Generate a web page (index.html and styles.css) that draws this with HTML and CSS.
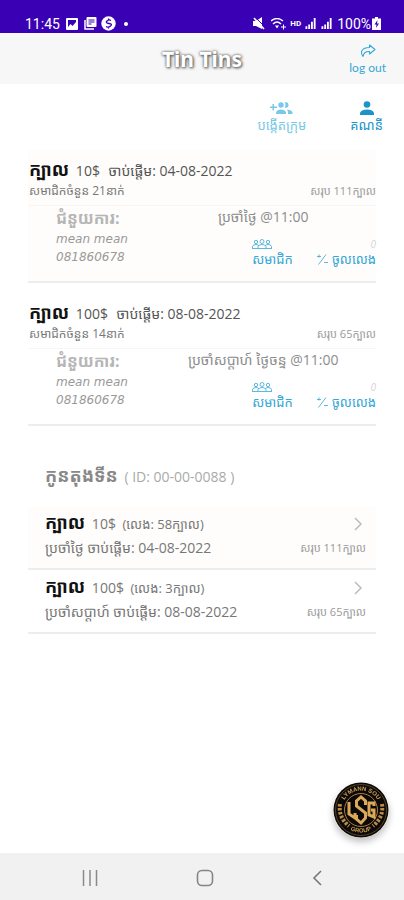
FILE: index.html
```html
<!DOCTYPE html>
<html lang="km">
<head>
<meta charset="UTF-8">
<meta name="viewport" content="width=device-width, initial-scale=1.0">
<title>Tin Tins</title>
<link rel="stylesheet" href="styles.css">
</head>
<body>

<!-- Shared icons -->
<svg class="sprite" aria-hidden="true">
    <symbol id="icon-members" viewBox="0 0 20 10">
        <g fill="none" stroke="currentColor" stroke-width=".8">
            <circle cx="4" cy="3" r="1.7"/>
            <circle cx="10" cy="2.5" r="2"/>
            <circle cx="16" cy="3" r="1.7"/>
            <path d="M.5 9V7.5Q1 5.5 4 5.5q2 0 3 1.5M6 9V7.5q1-2 4-2t4 2V9M13 7q1-1.5 3-1.5 3 0 3.5 2V9M0 9.5h20"/>
        </g>
    </symbol>
    <symbol id="icon-play" viewBox="0 0 11 11">
        <path d="M1.5 10.5L9 .5M0 2.5h4M2 .5v3M7 8.5h4" fill="none" stroke="currentColor" stroke-width=".8"/>
    </symbol>
    <symbol id="icon-chevron" viewBox="0 0 8 14">
        <path d="M1 1l6 6-6 6" fill="none" stroke="currentColor" stroke-width="1.5"/>
    </symbol>
    <symbol id="icon-signal" viewBox="0 0 12 12">
        <path d="M0 9h2v3H0zM3 7h2v5H3zM6 4h2v8H6zM9 0h2v12H9z" fill="currentColor"/>
    </symbol>
</svg>

<div class="status-bar">
    <span class="time">11:45</span>
    <svg width="12" height="12" viewBox="0 0 12 12"><path fill="#fff" fill-rule="evenodd" d="M1 0h10q1 0 1 1v10q0 1-1 1H1q-1 0-1-1V1q0-1 1-1zM2 2v8h8V2z"/><path d="M2 9l2.5-3 2 2L10 4v6H2z" fill="#fff"/></svg>
    <svg class="gap" width="13" height="13" viewBox="0 0 13 13"><path d="M1 3v9h9" fill="none" stroke="#fff" stroke-width="1.5"/><rect x="2.5" width="10" height="10" rx="1" fill="#fff"/><path d="M4.5 3h6M4.5 5h6M4.5 7h3" stroke="#3a00b4"/></svg>
    <svg width="15" height="15" viewBox="0 0 15 15"><circle cx="7.5" cy="7.5" r="7.2" fill="#fff"/><path d="M10 4.5Q8 3 6 5t2 2.5 1.5 2.5-4.5.5M7.5 2.5v2M7.5 11v1.5" fill="none" stroke="#3a00b4" stroke-width="1.3"/></svg>
    <span class="dot"></span>
    <span class="spacer"></span>
    <svg width="12" height="13" viewBox="0 0 12 13"><path d="M0 4h3l6-4v12L3 9H0z" fill="#fff"/><path d="M2 0l10 10" stroke="#3a00b4"/><path d="M1 1l10 11" stroke="#fff" stroke-width="1.6"/></svg>
    <svg class="gap" width="15" height="12" viewBox="0 0 15 12"><g fill="none" stroke="#fff" stroke-width="1.4"><path d="M0 3q6-5 12 0M2 6q4-4 8 0"/><path d="M10 9h5M12.5 6.5v5" stroke-width="1"/></g><path d="M4 7.5h4l-2 3z" fill="#fff"/></svg>
    <span class="hd">HD</span>
    <svg width="12" height="11"><use href="#icon-signal"/></svg>
    <svg width="12" height="11"><use href="#icon-signal"/></svg>
    <span class="battery-text">100%</span>
    <svg width="9" height="13" viewBox="0 0 9 13"><path d="M3 0h3v1.5h3V13H0V1.5h3z" fill="#fff"/><path d="M5.5 3L2.5 7.5h2L4 11l3-4.5H5z" fill="#3a00b4"/></svg>
</div>

<header class="header">
    <h1>Tin Tins</h1>
    <a class="logout" href="#">
        <svg width="16" height="14" viewBox="0 0 16 14"><path d="M9.5 1l5.5 4.5-5.5 4.5V7.5Q4 7 3 12.5 1 10 1.5 7.5 3 3.5 9.5 3.5z" fill="none" stroke="currentColor" stroke-width="1.1" stroke-linejoin="round"/></svg>
        <span>log out</span>
    </a>
</header>

<main>
    <nav class="tabs">
        <a class="tab tab-light" href="#">
            <svg width="23" height="14" viewBox="0 0 23 14"><g fill="currentColor"><path d="M2.5 3h1.5v2.5H7V7H4v2.5H2.500V7H0V5.500h2.500z"/><circle cx="11" cy="4" r="2.7"/><path d="M6 13v-1.500Q7 8.500 11 8.500t5 3V13z"/><path d="M14.500 1.500q4-1 4 2.500t-4 2.500q2-2.500 0-5zM17 8.500q5 .5 5.500 3V13H18v-1.500Q18 10 17 8.500z"/></g></svg>
            <span>បង្កើតក្រុម</span>
        </a>
        <a class="tab" href="#">
            <svg width="14" height="14" viewBox="0 0 14 14"><g fill="currentColor"><circle cx="7" cy="3.5" r="3.3"/><path d="M0 14v-2Q1 8.500 7 8.500t7 3.500v2z"/></g></svg>
            <span>គណនី</span>
        </a>
    </nav>

    <section class="card tinted">
        <h2><b>ក្បាល</b> 10$ <span class="start">ចាប់ផ្តើម: 04-08-2022</span></h2>
        <div class="row sub">
            <span>សមាជិកចំនួន 21នាក់</span>
            <span class="total">សរុប 111ក្បាល</span>
        </div>
        <div class="details">
            <div class="helper">
                <div class="helper-title">ជំនួយការ:</div>
                <div class="person">mean mean</div>
                <div class="person">081860678</div>
            </div>
            <div class="schedule">
                <div class="when">ប្រចាំថ្ងៃ @11:00</div>
                <div class="links">
                    <a href="#"><svg width="20" height="10"><use href="#icon-members"/></svg><span>សមាជិក</span></a>
                    <a href="#"><i class="count">0</i><span class="play"><svg width="11" height="11"><use href="#icon-play"/></svg>ចូលលេង</span></a>
                </div>
            </div>
        </div>
    </section>

    <section class="card">
        <h2><b>ក្បាល</b> 100$ <span class="start">ចាប់ផ្តើម: 08-08-2022</span></h2>
        <div class="row sub">
            <span>សមាជិកចំនួន 14នាក់</span>
            <span class="total">សរុប 65ក្បាល</span>
        </div>
        <div class="details">
            <div class="helper">
                <div class="helper-title">ជំនួយការ:</div>
                <div class="person">mean mean</div>
                <div class="person">081860678</div>
            </div>
            <div class="schedule">
                <div class="when">ប្រចាំសប្តាហ៍ ថ្ងៃចន្ទ @11:00</div>
                <div class="links">
                    <a href="#"><svg width="20" height="10"><use href="#icon-members"/></svg><span>សមាជិក</span></a>
                    <a href="#"><i class="count">0</i><span class="play"><svg width="11" height="11"><use href="#icon-play"/></svg>ចូលលេង</span></a>
                </div>
            </div>
        </div>
    </section>

    <h3 class="player"><b>កូនតុងទីន</b> ( ID: 00-00-0088 )</h3>

    <a class="item tinted" href="#">
        <span class="row">
            <span><b>ក្បាល</b> 10$ <small>(លេង: 58ក្បាល)</small></span>
            <svg class="chevron" width="8" height="14"><use href="#icon-chevron"/></svg>
        </span>
        <span class="row">
            <span>ប្រចាំថ្ងៃ ចាប់ផ្តើម: 04-08-2022</span>
            <span class="total">សរុប 111ក្បាល</span>
        </span>
    </a>
    <a class="item" href="#">
        <span class="row">
            <span><b>ក្បាល</b> 100$ <small>(លេង: 3ក្បាល)</small></span>
            <svg class="chevron" width="8" height="14"><use href="#icon-chevron"/></svg>
        </span>
        <span class="row">
            <span>ប្រចាំសប្តាហ៍ ចាប់ផ្តើម: 08-08-2022</span>
            <span class="total">សរុប 65ក្បាល</span>
        </span>
    </a>
</main>

<button class="fab" type="button" aria-label="Group">
    <svg width="56" height="56" viewBox="0 0 56 56">
        <defs>
            <path id="arc-top" d="M8.5 28a19.5 19.5 0 0 1 39 0"/>
            <path id="arc-bottom" d="M13 45a23 23 0 0 0 30 0"/>
        </defs>
        <circle cx="28" cy="28" r="27.5" fill="#0b0a08"/>
        <circle cx="28" cy="28" r="25.5" fill="none" stroke="#8a6633" stroke-width=".6"/>
        <circle cx="28" cy="28" r="16.5" fill="none" stroke="#a87c40"/>
        <path d="M7 22q-2 13 9 22M49 22q2 13-9 22" fill="none" stroke="#b98a48" stroke-width="4" stroke-dasharray="2.5 1.5"/>
        <text class="seal"><textPath href="#arc-top" startOffset="50%" text-anchor="middle">LYMANN SOU</textPath></text>
        <text class="seal"><textPath href="#arc-bottom" startOffset="50%" text-anchor="middle">GROUP</textPath></text>
        <g fill="none" stroke="#dca95a" stroke-width="3">
            <path d="M16 20v12l6 4v-5"/>
            <path d="M32.5 23v-4L28 15l-4.5 4v5l9 7v5L28 41l-4.5-4v-4"/>
            <path d="M41 24v-3h-5v12l5 2v-7h-3"/>
        </g>
    </svg>
</button>

<footer class="nav-bar">
    <button type="button" aria-label="Recent"><svg width="16" height="16" viewBox="0 0 16 16"><path d="M1.5 0v16M8 0v16M14.5 0v16" stroke="#8a8a8a" stroke-width="1.5"/></svg></button>
    <button type="button" aria-label="Home"><svg width="18" height="18" viewBox="0 0 18 18"><rect x="1.5" y="1.5" width="15" height="15" rx="4.5" fill="none" stroke="#858585" stroke-width="1.6"/></svg></button>
    <button type="button" aria-label="Back"><svg width="10" height="16" viewBox="0 0 10 16"><path d="M9 1L2 8l7 7" fill="none" stroke="#777" stroke-width="1.6"/></svg></button>
</footer>

</body>
</html>
```
FILE: styles.css
```css
* {
    box-sizing: border-box;
}
body {
    font-family: "Open Sans", "Noto Sans", "Noto Sans Khmer", "Khmer OS", sans-serif;
    background-color: #fff;
    color: #666;
    margin: 0;
    min-height: 100vh;
    display: flex;
    flex-direction: column;
}
a {
    color: #35a7d6;
    text-decoration: none;
}
button {
    border: none;
    background: none;
    padding: 0;
    cursor: pointer;
}
svg {
    display: block;
}
.sprite {
    position: absolute;
    width: 0;
    height: 0;
}

/* Phone status bar */
.status-bar {
    display: flex;
    align-items: center;
    gap: 4px;
    height: 33px;
    padding: 14px 23px 0 25px;
    background-color: #3a00b4;
    color: #fff;
    font-family: Roboto, sans-serif;
    font-size: 14px;
}
.time {
    margin-right: 2px;
}
.gap {
    margin-left: 2px;
}
.dot {
    width: 4px;
    height: 4px;
    margin-left: 4px;
    border-radius: 50%;
    background-color: #fff;
}
.spacer {
    flex: 1;
}
.hd {
    font-size: 8px;
    font-weight: bold;
}
.battery-text {
    margin-right: -3px;
}

/* Header */
.header {
    display: grid;
    grid-template-columns: 1fr auto 1fr;
    align-items: center;
    height: 51px;
    padding: 0 18px;
    background-color: #f7f7f7;
}
.header h1 {
    grid-column: 2;
    margin: 0;
    color: #fff;
    font-family: "Noto Sans", sans-serif;
    font-size: 21px;
    line-height: 24px;
    text-shadow: 0 0 3px #555, 1px 1px 3px #555;
}
.logout {
    justify-self: end;
    display: flex;
    flex-direction: column;
    align-items: center;
    padding-top: 4px;
    font-family: Lato, sans-serif;
    font-size: 12px;
    line-height: 20px;
}

main {
    flex: 1;
    padding: 0 28px;
}

/* Tabs */
.tabs {
    display: flex;
    justify-content: flex-end;
    gap: 44px;
    height: 66px;
    padding-top: 17px;
    margin-right: -7px;
}
.tab {
    display: flex;
    flex-direction: column;
    align-items: center;
    color: #1c93c9;
    font-size: 13px;
    line-height: 20px;
}
.tab-light {
    color: #79c9e6;
}

/* Group cards */
.card {
    min-height: 133px;
    margin-bottom: 10px;
    padding: 9px 0 0 1px;
    border-bottom: 2px solid #ededed;
}
.tinted {
    background-color: #fefdfb;
}
.card h2 {
    margin: 0;
    color: #555;
    font-size: 14px;
    font-weight: normal;
    line-height: 22px;
    white-space: nowrap;
}
b {
    margin-right: 3px;
    color: #111;
    font-size: 18px;
    line-height: 20px;
}
.start {
    margin-left: 5px;
}
.row {
    display: flex;
    justify-content: space-between;
    align-items: center;
    white-space: nowrap;
}
.sub {
    height: 24px;
    padding-bottom: 6px;
    border-bottom: 1px solid #f8f6f5;
    color: #777;
    font-size: 12px;
    line-height: 18px;
}
.total {
    color: #999;
    font-size: 11px;
}
.details {
    display: flex;
    justify-content: space-between;
}
.helper {
    padding-left: 27px;
    color: #999;
}
.helper-title {
    color: #b5b5b5;
    font-size: 16px;
    font-weight: bold;
    line-height: 24px;
}
.person {
    font-family: "DejaVu Sans", sans-serif;
    font-size: 12px;
    font-style: italic;
    line-height: 18px;
}
.schedule {
    flex: 0 0 65%;
}
.when {
    color: #8c8c8c;
    font-size: 14px;
    line-height: 22px;
    text-align: center;
    white-space: nowrap;
}
.links {
    display: flex;
    justify-content: flex-end;
    gap: 24px;
    padding-top: 11px;
}
.links a {
    display: flex;
    flex-direction: column;
    font-size: 13px;
    line-height: 20px;
}
.play {
    display: flex;
    align-items: center;
    gap: 4px;
}
.count {
    align-self: flex-end;
    color: #d5d5d5;
    font-size: 10px;
    line-height: 10px;
}

/* Player list */
.player {
    margin: 0;
    padding: 29px 0 17px 17px;
    color: #aaa;
    font-size: 14px;
    font-weight: normal;
    line-height: 24px;
}
.player b {
    color: #888;
}
.item {
    display: block;
    height: 64px;
    padding: 6px 10px 0 17px;
    border-bottom: 2px solid #ededed;
    color: #777;
    font-size: 14px;
    line-height: 24px;
}
.item small {
    margin-left: 3px;
    font-size: 13px;
}
.chevron {
    margin-right: 4px;
    color: #bbb;
}

/* Floating logo */
.fab {
    position: fixed;
    right: 15px;
    bottom: 62px;
    border-radius: 50%;
    box-shadow: 0 4px 7px rgba(0, 0, 0, 0.25);
}
.seal {
    fill: #cf9e55;
    font-family: "Liberation Sans", sans-serif;
    font-size: 6px;
    font-weight: bold;
}

/* Phone navigation */
.nav-bar {
    display: flex;
    justify-content: space-around;
    align-items: center;
    height: 47px;
    padding: 3px 33px 0;
    background-color: #f1f1f1;
}
.nav-bar button {
    padding: 8px;
}
```
